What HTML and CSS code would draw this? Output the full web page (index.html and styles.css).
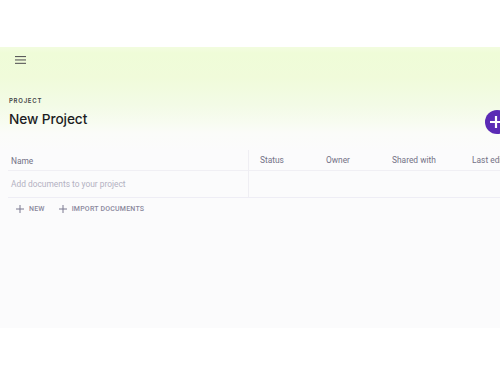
FILE: index.html
```html
<!DOCTYPE html>
<html>
<head>
<meta charset="utf-8">
<link rel="stylesheet" href="styles.css">
</head>
<body>
<div class="top-space"></div>
<div class="app">
  <div class="toolbar">
    <svg class="menu" width="11" height="8" viewBox="0 0 11 8"><rect x="0" y="0" width="11" height="1.1" fill="#5a5a5a"/><rect x="0" y="3.4" width="11" height="1.1" fill="#5a5a5a"/><rect x="0" y="6.8" width="11" height="1.1" fill="#5a5a5a"/></svg>
  </div>
  <div class="title-area">
    <div class="eyebrow">PROJECT</div>
    <h1 class="title">New Project</h1>
    <div class="fab"><svg width="14" height="14" viewBox="0 0 14 14"><path d="M7 1v12M1 7h12" stroke="#fff" stroke-width="2.2"/></svg></div>
  </div>
  <div class="table">
    <div class="row head">
      <div class="cell name">Name</div>
      <div class="cell status">Status</div>
      <div class="cell owner">Owner</div>
      <div class="cell shared">Shared with</div>
      <div class="cell edited">Last edited</div>
    </div>
    <div class="row body">
      <div class="cell name placeholder">Add documents to your project</div>
      <div class="cell rest"></div>
    </div>
  </div>
  <div class="actions">
    <button class="action"><svg width="8" height="8" viewBox="0 0 8 8"><path d="M4 0v8M0 4h8" stroke="#7a7890" stroke-width="1"/></svg>NEW</button>
    <button class="action"><svg width="8" height="8" viewBox="0 0 8 8"><path d="M4 0v8M0 4h8" stroke="#7a7890" stroke-width="1"/></svg>IMPORT DOCUMENTS</button>
  </div>
</div>
</body>
</html>
```
FILE: styles.css
```css
html, body { margin: 0; padding: 0; background: #fff; }
body { width: 500px; height: 375px; overflow: hidden; font-family: Roboto, "Liberation Sans", sans-serif; }
.top-space { height: 47px; }
.app {
  height: 281px;
  background: linear-gradient(180deg, #f2fce0 0px, #effcd8 6px, #f0fbda 30px, #f3fbe6 58px, #f8fcf1 76px, #fbfcf9 86px, #fbfbfc 104px, #fbfbfc 100%);
  position: relative;
  overflow: hidden;
}
.toolbar { height: 26px; display: flex; align-items: center; padding-left: 15px; }
.menu { display: block; }
.title-area { position: relative; padding: 24px 9px 0; height: 54px; box-sizing: border-box; }
.eyebrow { font-family: Inter, Roboto, sans-serif; font-size: 6px; font-weight: 600; letter-spacing: 0.75px; color: #444; line-height: 8px; }
.title { margin: 5px 0 0; font-family: Inter, Roboto, sans-serif; font-size: 13.7px; font-weight: 500; color: #1d1d1f; line-height: 18px; letter-spacing: -0.1px; }
.fab {
  position: absolute; left: 485px; top: 37px; width: 24px; height: 24px; border-radius: 50%;
  background: #5b2bb5; display: flex; align-items: center; justify-content: center;
}
.fab svg { margin-left: -3px; }
.table { margin: 23px 0 0 8px; }
.row { display: flex; }
.row.head { height: 20px; border-bottom: 1px solid #f0eff4; align-items: center; }
.row.body { height: 26px; border-bottom: 1px solid #eeedf5; }
.cell { font-size: 8.4px; color: #737186; white-space: nowrap; flex-shrink: 0; }
.cell.name { width: 241px; padding-left: 3px; box-sizing: border-box; border-right: 1px solid #efeef3; height: 100%; display: flex; align-items: center; }
.row.head .cell.name { height: 22px; margin-top: 2px; }
.cell.status { width: 77px; padding-left: 11px; box-sizing: border-box; }
.cell.owner { width: 66px; }
.cell.shared { width: 80px; }
.cell.placeholder { color: #b3b1c2; }
.actions { display: flex; gap: 14px; padding: 5px 0 0 16px; }
.action { border: 0; background: none; padding: 0; display: flex; align-items: center; gap: 5px; font-family: Roboto, sans-serif; font-size: 7px; font-weight: 500; color: #8a889c; letter-spacing: 0.2px; height: 12px; }
```
